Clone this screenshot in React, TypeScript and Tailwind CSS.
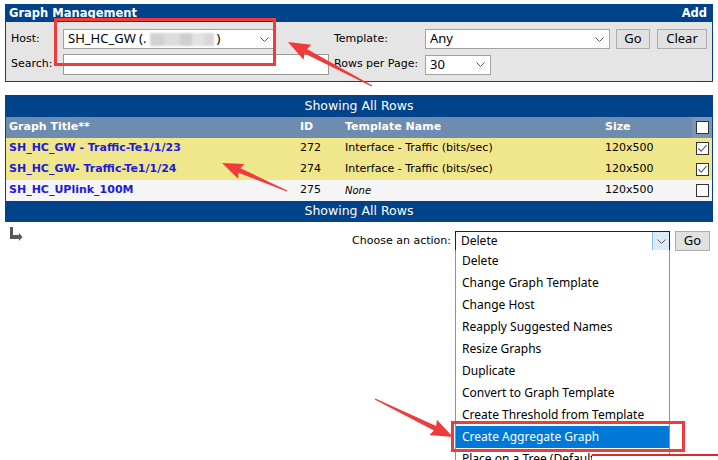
import React from 'react'

const verdana = "font-['DejaVu_Sans',Verdana,sans-serif]"
const segoe = "font-['Noto_Sans','Open_Sans',sans-serif]"

function Chevron({ className = '' }: { className?: string }) {
  return (
    <svg width="9" height="5" viewBox="0 0 9 5" className={className}>
      <polyline points="0.5,0.5 4.5,4.5 8.5,0.5" fill="none" stroke="#555" strokeWidth="1" />
    </svg>
  )
}

function FakeSelect({ width, children }: { width: string; children: React.ReactNode }) {
  return (
    <div className={`${width} h-[20px] bg-white border border-[#a2a2a2] flex items-center pl-[4px] pr-[5px] ${segoe} text-[13px] text-black`}>
      <div className="flex-1 flex items-center whitespace-nowrap overflow-hidden">{children}</div>
      <Chevron />
    </div>
  )
}

function Button({ label, width }: { label: string; width: string }) {
  return (
    <div className={`${width} h-[20px] bg-[#e1e1e1] border border-[#adadad] flex items-center justify-center ${segoe} text-[13px] text-black`}>
      {label}
    </div>
  )
}

function Checkbox({ checked }: { checked?: boolean }) {
  return (
    <div className="w-[13px] h-[13px] bg-white border border-[#333] flex items-center justify-center">
      {checked && (
        <svg width="11" height="11" viewBox="0 0 11 11">
          <polyline points="1.5,5.5 4.2,8.3 9.5,2.2" fill="none" stroke="#555" strokeWidth="1.1" />
        </svg>
      )}
    </div>
  )
}

type Row = { title: string; id: string; template: string; italic?: boolean; size: string; checked: boolean; bg: string }

const rows: Row[] = [
  { title: 'SH_HC_GW - Traffic-Te1/1/23', id: '272', template: 'Interface - Traffic (bits/sec)', size: '120x500', checked: true, bg: 'bg-[#f0e68c]' },
  { title: 'SH_HC_GW- Traffic-Te1/1/24', id: '274', template: 'Interface - Traffic (bits/sec)', size: '120x500', checked: true, bg: 'bg-[#f0e68c]' },
  { title: 'SH_HC_UPlink_100M', id: '275', template: 'None', italic: true, size: '120x500', checked: false, bg: 'bg-[#f5f5f5]' },
]

const actions = [
  'Delete',
  'Change Graph Template',
  'Change Host',
  'Reapply Suggested Names',
  'Resize Graphs',
  'Duplicate',
  'Convert to Graph Template',
  'Create Threshold from Template',
  'Create Aggregate Graph',
  'Place on a Tree (Default)',
]

function arrowPoints(tx: number, ty: number, hx: number, hy: number, headLen: number, headW: number, shaftW: number) {
  const dx = hx - tx
  const dy = hy - ty
  const L = Math.hypot(dx, dy)
  const ux = dx / L
  const uy = dy / L
  const nx = -uy
  const ny = ux
  const bx = hx - ux * headLen
  const by = hy - uy * headLen
  const p = (x: number, y: number) => `${x.toFixed(1)},${y.toFixed(1)}`
  return [
    p(tx + nx * 0.6, ty + ny * 0.6),
    p(bx + (nx * shaftW) / 2, by + (ny * shaftW) / 2),
    p(bx + (nx * headW) / 2 - ux * 2, by + (ny * headW) / 2 - uy * 2),
    p(hx, hy),
    p(bx - (nx * headW) / 2 - ux * 2, by - (ny * headW) / 2 - uy * 2),
    p(bx - (nx * shaftW) / 2, by - (ny * shaftW) / 2),
    p(tx - nx * 0.6, ty - ny * 0.6),
  ].join(' ')
}

function Annotations() {
  const red = '#ee3b3b'
  return (
    <svg width="718" height="460" className="absolute left-0 top-0 pointer-events-none">
      <rect x="55.5" y="19.5" width="219" height="45" fill="none" stroke={red} strokeWidth="3" />
      <rect x="452.5" y="422.5" width="231" height="28" fill="none" stroke={red} strokeWidth="3" />
      <polygon points={arrowPoints(372, 86, 288, 42, 20, 17, 5)} fill={red} />
      <polygon points={arrowPoints(287, 191, 222, 163, 19, 16, 5)} fill={red} />
      <polygon points={arrowPoints(375, 399, 453, 437, 20, 17, 5)} fill={red} />
      <rect x="592" y="456" width="126" height="4" fill="#ffffff" />
      <rect x="592" y="454" width="126" height="2" fill="#d92b2b" />
    </svg>
  )
}

export default function App() {
  return (
    <div className="relative w-[718px] h-[460px] overflow-hidden bg-white">
      <div className="px-[5px] pt-[4px]">
        {/* filter panel */}
        <div className="border border-[#00438a]">
          <div className={`h-[17px] bg-[#00438a] flex items-center justify-between pl-[3px] pr-[5px] text-white font-bold text-[11.5px] ${verdana}`}>
            <span>Graph Management</span>
            <span>Add</span>
          </div>
          <div className={`bg-[#e5e5e5] pl-[5px] pt-[7px] pb-[6px] flex flex-col gap-[5px] text-[11px] text-black ${verdana}`}>
            <div className="flex items-center">
              <div className="w-[52px]">Host:</div>
              <div className="w-[271px]">
                <FakeSelect width="w-[212px]">
                  <span>SH_HC_GW (.</span>
                  <span className="flex h-[13px] ml-[4px] blur-[1px]">
                    <span className="w-[14px] bg-[#d2d2d2]" />
                    <span className="w-[16px] bg-[#dcdcdc]" />
                    <span className="w-[12px] bg-[#cfcfcf]" />
                    <span className="w-[12px] bg-[#e2e2e2]" />
                    <span className="w-[10px] bg-[#d8d8d8]" />
                  </span>
                  <span className="ml-[2px]">)</span>
                </FakeSelect>
              </div>
              <div className="w-[91px]">Template:</div>
              <FakeSelect width="w-[185px]">Any</FakeSelect>
              <div className="w-[6px]" />
              <Button label="Go" width="w-[34px]" />
              <div className="w-[7px]" />
              <Button label="Clear" width="w-[50px]" />
            </div>
            <div className="flex items-center">
              <div className="w-[52px]">Search:</div>
              <div className="w-[271px]">
                <div className="w-[266px] h-[21px] bg-white border border-[#9a9a9a]" />
              </div>
              <div className="w-[91px]">Rows per Page:</div>
              <FakeSelect width="w-[66px]">30</FakeSelect>
            </div>
          </div>
        </div>

        {/* graph table */}
        <div className={`mt-[13px] border-x border-[#00438a] text-[11px] ${verdana}`}>
          <div className="h-[22px] bg-[#00438a] flex items-center justify-center text-white text-[12.5px]">Showing All Rows</div>
          <div className="grid grid-cols-[291px_45px_260px_90px_20px] h-[21px] bg-[#6e8bb0] text-white font-bold">
            <div className="pl-[3px] flex items-center">Graph Title**</div>
            <div className="pl-[3px] flex items-center">ID</div>
            <div className="pl-[3px] flex items-center">Template Name</div>
            <div className="pl-[3px] flex items-center">Size</div>
            <div className="bg-[#7b96b9] flex items-center justify-center pl-[1px]">
              <Checkbox />
            </div>
          </div>
          {rows.map((r) => (
            <div key={r.id} className={`grid grid-cols-[291px_45px_260px_90px_20px] h-[21px] ${r.bg} text-black`}>
              <div className="pl-[3px] flex items-center font-bold text-[#1c1cd8]">{r.title}</div>
              <div className="pl-[3px] flex items-center">{r.id}</div>
              <div className={`pl-[3px] flex items-center ${r.italic ? 'italic text-[10px]' : ''}`}>{r.template}</div>
              <div className="pl-[3px] flex items-center">{r.size}</div>
              <div className="flex items-center justify-center pl-[1px]">
                <Checkbox checked={r.checked} />
              </div>
            </div>
          ))}
          <div className="h-[21px] bg-[#00438a] flex items-center justify-center text-white text-[12.5px]">Showing All Rows</div>
        </div>

        {/* actions */}
        <div className="flex items-start mt-[5px]">
          <svg width="13" height="15" viewBox="0 0 13 15" className="ml-[5px]">
            <rect x="0" y="0" width="3" height="12" fill="#595959" />
            <rect x="0" y="8" width="9" height="4" fill="#595959" />
            <polygon points="9,6 12.5,10 9,14" fill="#595959" />
          </svg>
          <div className="flex-1 flex items-center justify-end mt-[4px] pr-[3px]">
            <span className={`text-[11px] text-black mr-[4px] ${verdana}`}>Choose an action:</span>
            <div className="relative">
              <div className={`w-[215px] h-[20px] bg-white border border-[#222] flex items-center ${segoe} text-[12px] text-black`}>
                <span className="flex-1 pl-[5px]">Delete</span>
                <div className="w-[17px] h-full bg-[#dcebfa] border-l border-[#8fbde9] flex items-center justify-center">
                  <Chevron />
                </div>
              </div>
              <div className={`absolute left-0 top-[19px] w-[215px] bg-white border-x border-[#8e9298] ${segoe} text-[12px] text-black`}>
                {actions.map((a, i) => (
                  <div
                    key={a}
                    className={`h-[22px] flex items-center pl-[6px] whitespace-nowrap ${i === 8 ? 'bg-[#0078d7] text-white' : ''}`}
                  >
                    {a}
                  </div>
                ))}
              </div>
            </div>
            <div className="w-[5px]" />
            <Button label="Go" width="w-[35px]" />
          </div>
        </div>
      </div>
      <Annotations />
    </div>
  )
}
